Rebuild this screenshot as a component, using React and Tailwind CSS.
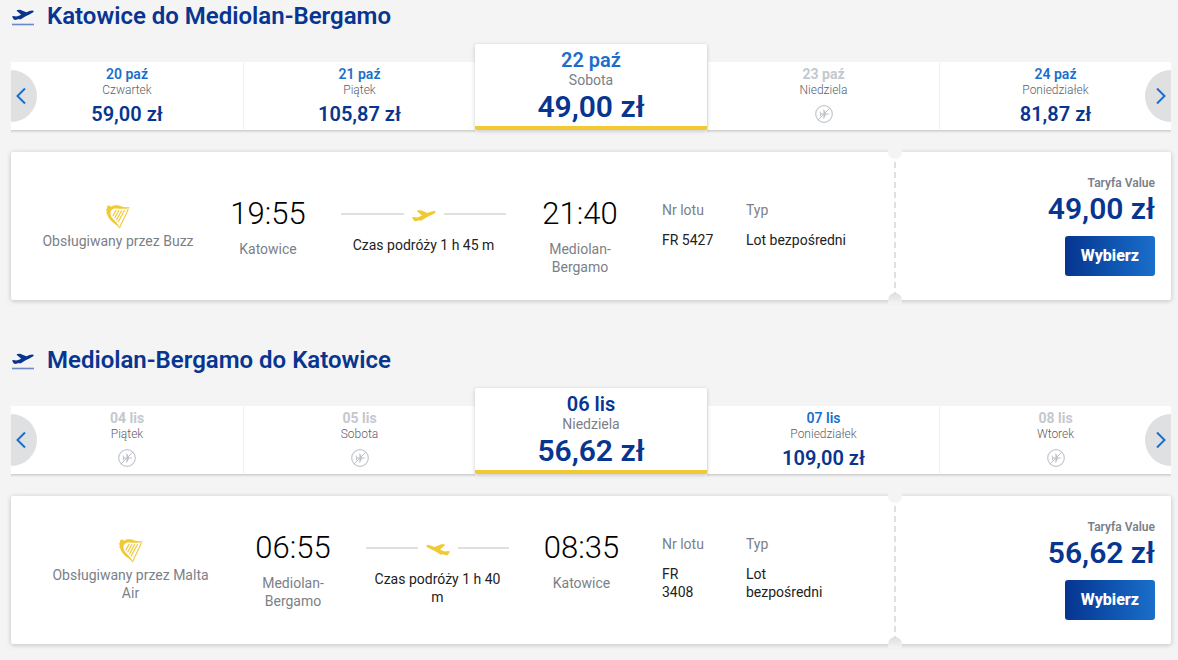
import { useState } from 'react';
import { clsx } from 'clsx';

const trips = [
  {
    id: 'outbound',
    title: 'Katowice do Mediolan-Bergamo',
    selected: 2,
    dates: [
      { day: '20 paź', weekday: 'Czwartek', price: '59,00 zł' },
      { day: '21 paź', weekday: 'Piątek', price: '105,87 zł' },
      { day: '22 paź', weekday: 'Sobota', price: '49,00 zł' },
      { day: '23 paź', weekday: 'Niedziela', price: null },
      { day: '24 paź', weekday: 'Poniedziałek', price: '81,87 zł' },
    ],
    flight: {
      operator: 'Obsługiwany przez Buzz',
      departure: '19:55',
      from: 'Katowice',
      duration: 'Czas podróży 1 h 45 m',
      arrival: '21:40',
      to: 'Mediolan-Bergamo',
      number: 'FR 5427',
      type: 'Lot bezpośredni',
      price: '49,00 zł',
    },
    grid: 'grid-cols-[166fr_134fr_177fr_136fr_98fr_149fr] pt-[46px]',
    dateColor: 'text-[#1a6fcb]',
  },
  {
    id: 'inbound',
    title: 'Mediolan-Bergamo do Katowice',
    selected: 2,
    landing: true,
    dates: [
      { day: '04 lis', weekday: 'Piątek', price: null },
      { day: '05 lis', weekday: 'Sobota', price: null },
      { day: '06 lis', weekday: 'Niedziela', price: '56,62 zł' },
      { day: '07 lis', weekday: 'Poniedziałek', price: '109,00 zł' },
      { day: '08 lis', weekday: 'Wtorek', price: null },
    ],
    flight: {
      operator: 'Obsługiwany przez Malta Air',
      departure: '06:55',
      from: 'Mediolan-Bergamo',
      duration: 'Czas podróży 1 h 40 m',
      arrival: '08:35',
      to: 'Katowice',
      number: 'FR 3408',
      type: 'Lot bezpośredni',
      price: '56,62 zł',
    },
    grid: 'grid-cols-[191fr_134fr_155fr_133fr_98fr_149fr] pt-9',
    detailWidth: 'w-min',
    dateColor: 'text-[#073590]',
  },
];

const planePath =
  'M0 7.6L2 7L4.2 7.6C6.5 7.2 8.5 6.4 10 5.6L5 1.2C5 .6 5.6.4 6.2.3L8.8.2L15.5 3C18 1.8 20 1 22 .9C23.6.9 24.2 1.9 23 2.9C20.5 4.6 17.5 6 14.8 7.2L9.6 10.6L7.6 10.8L8.4 9.9L4.6 11.1C3.4 11.4 2.4 11.2 1.8 10.4Z';

const TakeoffIcon = () => (
  <svg width="24" height="20" viewBox="0 0 24 20" aria-hidden="true">
    <path d={planePath} fill="#073590" transform="translate(1 3.6) scale(0.92)" />
    <path d="M1 18.5h22" stroke="#6d8ac6" strokeWidth="1.6" />
  </svg>
);

const PlaneIcon = ({ landing }) => (
  <svg
    className={clsx('mx-2 mt-1 shrink-0', landing && '-scale-x-100')}
    width="24"
    height="12"
    viewBox="0 0 24 12"
    aria-hidden="true"
  >
    <path d={planePath} fill="#f1c933" />
  </svg>
);

const HarpIcon = () => (
  <svg width="24" height="24" viewBox="0 0 24 24" fill="none" aria-hidden="true">
    <path
      d="M0 4.8C1 3.8 1.2 3 1.1 1.7C1.3.5 3.3 0 4.1 1.1L5.2 1.7C8 0 12 0 15 1.2C18 2.4 21 2.2 24 2.3C22.8 3.1 21.5 3.5 19.8 3.7C15 4.3 11 3 7.6 3.7C5 4.5 4 7 4.5 9.6C5.3 13.5 8.7 15 11 18.3C12.5 20 13.4 22 13.9 24C12.4 22 11.2 20.6 9.1 19C5.2 16 2.3 13.6 1.2 9.4L.1 7.3L1 6.9Z"
      fill="#f1c933"
    />
    <path d="M22.4 3.4C20.7 9 16.5 15.6 13.5 23" stroke="#f1c933" strokeWidth="1.1" />
    <path
      d="M10.2 5L6.8 11.3M13 5.2L8.6 13.3M15.8 5.3L10.4 15.3M18.6 5.2L12 17.3"
      stroke="#f1c933"
      strokeWidth="1.2"
    />
  </svg>
);

const NoFlightIcon = () => (
  <svg width="18" height="18" viewBox="0 0 18 18" fill="none" role="img" aria-label="Brak lotów">
    <circle cx="9" cy="9" r="8.3" stroke="#c4c8ce" strokeWidth="1.2" />
    <path
      d="M4.6 6.6h.7l1.2 1.8h2L8.2 4.4h.9l2 4h2c.8 0 1.2.3 1.2.6s-.4.6-1.2.6h-2L9.1 13.6h-.9l.3-4H6.5l-1.2 1.8h-.7l.5-2.4z"
      fill="#c0c4ca"
    />
    <path d="M3.2 14.8L14.8 3.2" stroke="#c0c4ca" strokeWidth="1" />
  </svg>
);

const ArrowButton = ({ next }) => (
  <button
    type="button"
    aria-label={next ? 'Następne daty' : 'Poprzednie daty'}
    className={clsx(
      'absolute bottom-2 z-10 flex h-[52px] w-[26px] items-center bg-[#dfe0e2]',
      next ? 'right-0 justify-end rounded-l-full pr-1' : 'left-0 rounded-r-full pl-1',
    )}
  >
    <svg width="12" height="18" viewBox="0 0 12 18" fill="none" stroke="#1a6fcb" strokeWidth="2">
      <path d={next ? 'M2 1.5L9.5 9L2 16.5' : 'M10 1.5L2.5 9L10 16.5'} />
    </svg>
  </button>
);

const DateTab = ({ date, active, activeColor, first, onSelect }) => {
  if (active) {
    return (
      <button
        type="button"
        aria-pressed="true"
        className="z-[1] flex flex-col items-center rounded-xs border-b-4 border-[#f1c933] bg-white pt-[5px] pb-[2px] shadow-[0_1px_4px_rgba(0,0,0,0.2)]"
      >
        <span className={clsx('text-xl leading-[22px] font-semibold', activeColor)}>
          {date.day}
        </span>
        <span className="text-sm leading-[18px] text-[#7b7f88]">{date.weekday}</span>
        <span className="text-[30px] leading-[35px] font-semibold text-[#073590]">
          {date.price}
        </span>
      </button>
    );
  }

  return (
    <button
      type="button"
      disabled={!date.price}
      onClick={onSelect}
      className={clsx(
        'flex h-[68px] flex-col items-center bg-white pt-1 shadow-[0_1px_0_#d2d2d2,0_2px_0_#dfdfdf,0_3px_0_#ececec]',
        !first && 'border-l border-[#f1f1f1]',
      )}
    >
      <span
        className={clsx(
          'text-sm leading-4',
          date.price ? 'font-semibold text-[#1a6fcb]' : 'font-bold text-[#c4c8ce]',
        )}
      >
        {date.day}
      </span>
      <span className="text-xs leading-4 font-light text-[#5c606b]">{date.weekday}</span>
      <span className="mt-1 flex h-6 items-center text-xl leading-6 font-semibold text-[#073590]">
        {date.price || <NoFlightIcon />}
      </span>
    </button>
  );
};

const Stop = ({ time, city }) => (
  <div className="flex flex-col items-center">
    <time className="text-[31px] leading-8 font-light text-black">{time}</time>
    <span className="mt-[10px] max-w-24 text-center text-[#7b7f88]">{city}</span>
  </div>
);

const Detail = ({ label, value, width }) => (
  <div className="pt-[3px]">
    <dt className="whitespace-nowrap text-[#7b7f88]">{label}</dt>
    <dd className={clsx('mt-3 text-[#222222]', width)}>{value}</dd>
  </div>
);

const FlightCard = ({ trip }) => {
  const { flight } = trip;

  return (
    <article className="mt-[22px] grid grid-cols-[884fr_276fr] rounded-xs bg-white shadow-[0_1px_5px_rgba(0,0,0,0.22)]">
      <div className={clsx('grid items-start pl-6 text-sm leading-[18px]', trip.grid)}>
        <div className="flex flex-col items-center pt-[7px]">
          <HarpIcon />
          <span className="mt-[3px] max-w-[170px] text-center text-[#7b7f88]">
            {flight.operator}
          </span>
        </div>
        <Stop time={flight.departure} city={flight.from} />
        <div className="px-[6px] text-center text-[#222222]">
          <div className="flex h-8 items-center">
            <span className="h-[2px] flex-1 bg-[#e0e0e0]" />
            <PlaneIcon landing={trip.landing} />
            <span className="h-[2px] flex-1 bg-[#e0e0e0]" />
          </div>
          <p className="mt-[6px] px-1">{flight.duration}</p>
        </div>
        <Stop time={flight.arrival} city={flight.to} />
        <dl className="col-span-2 grid grid-cols-[98fr_149fr]">
          <div className="pl-[14px]">
            <Detail label="Nr lotu" value={flight.number} width={trip.detailWidth} />
          </div>
          <Detail label="Typ" value={flight.type} width={trip.detailWidth} />
        </dl>
      </div>

      <div className="relative flex flex-col items-end pt-[23px] pr-4 pb-6">
        {/* ticket perforation */}
        <span className="absolute inset-y-0 left-0 w-[2px] -translate-x-1/2 bg-[repeating-linear-gradient(to_bottom,#e0e0e0_0_6px,#ffffff_6px_10px)]" />
        <span className="absolute -top-1 left-0 h-[11px] w-[14px] -translate-x-1/2 rounded-b-full bg-[#f4f4f4]" />
        <span className="absolute -bottom-1 left-0 h-[11px] w-[14px] -translate-x-1/2 rounded-t-full bg-linear-to-b from-[#dedede] to-[#f4f4f4]" />

        <span className="text-xs leading-4 font-semibold text-[#7b7f88]">Taryfa Value</span>
        <span className="mt-[2px] text-[30px] leading-8 font-semibold text-[#073590]">
          {flight.price}
        </span>
        <button
          type="button"
          className="mt-[11px] h-10 rounded-[3px] bg-linear-to-r from-[#073590] to-[#1a6fcb] px-4 text-base leading-6 font-extrabold text-white"
        >
          Wybierz
        </button>
      </div>
    </article>
  );
};

const Trip = ({ trip }) => {
  const [selected, setSelected] = useState(trip.selected);

  return (
    <section>
      <div className="flex items-center gap-3">
        <TakeoffIcon />
        <h2 className="text-2xl leading-8 font-semibold text-[#073590]">{trip.title}</h2>
      </div>
      <div className="relative mt-3 grid grid-cols-5 items-end">
        <ArrowButton />
        {trip.dates.map((date, index) => (
          <DateTab
            key={date.day}
            date={date}
            active={index === selected}
            activeColor={trip.dateColor}
            first={index === 0}
            onSelect={() => setSelected(index)}
          />
        ))}
        <ArrowButton next />
      </div>
      <FlightCard trip={trip} />
    </section>
  );
};

const App = () => (
  <main className="flex min-h-screen flex-col gap-11 bg-[#f4f4f4] pr-[7px] pb-4 pl-[11px] font-[Roboto,sans-serif]">
    {trips.map((trip) => (
      <Trip key={trip.id} trip={trip} />
    ))}
  </main>
);

export default App;
